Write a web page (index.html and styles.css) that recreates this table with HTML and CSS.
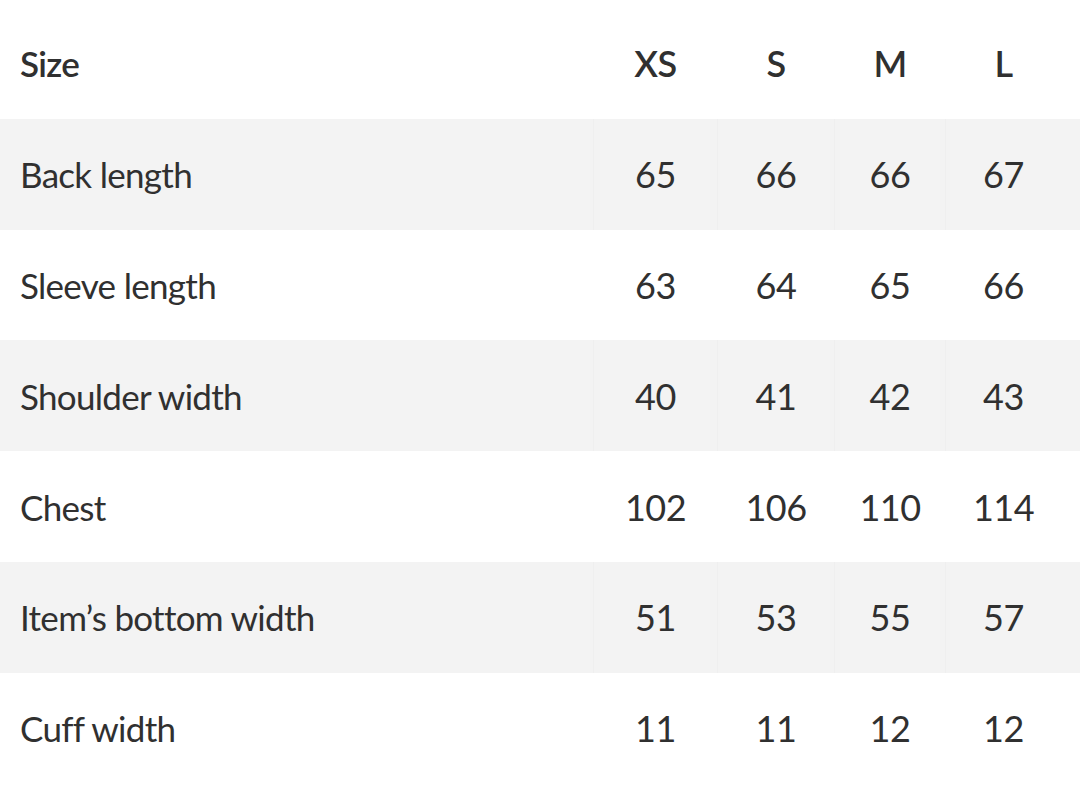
FILE: index.html
```html
<!DOCTYPE html>
<html>
<head>
<meta charset="utf-8">
<link rel="stylesheet" href="styles.css">
</head>
<body>
<div class="table">
  <div class="row head">
    <div class="label">Size</div><div class="cell">XS</div><div class="cell">S</div><div class="cell">M</div><div class="cell">L</div><div class="end"></div>
  </div>
  <div class="row alt">
    <div class="label">Back length</div><div class="cell">65</div><div class="cell">66</div><div class="cell">66</div><div class="cell">67</div><div class="end"></div>
  </div>
  <div class="row">
    <div class="label">Sleeve length</div><div class="cell">63</div><div class="cell">64</div><div class="cell">65</div><div class="cell">66</div><div class="end"></div>
  </div>
  <div class="row alt">
    <div class="label">Shoulder width</div><div class="cell">40</div><div class="cell">41</div><div class="cell">42</div><div class="cell">43</div><div class="end"></div>
  </div>
  <div class="row">
    <div class="label">Chest</div><div class="cell">102</div><div class="cell">106</div><div class="cell">110</div><div class="cell">114</div><div class="end"></div>
  </div>
  <div class="row alt">
    <div class="label">Item’s bottom width</div><div class="cell">51</div><div class="cell">53</div><div class="cell">55</div><div class="cell">57</div><div class="end"></div>
  </div>
  <div class="row">
    <div class="label">Cuff width</div><div class="cell">11</div><div class="cell">11</div><div class="cell">12</div><div class="cell">12</div><div class="end"></div>
  </div>
</div>
</body>
</html>
```
FILE: styles.css
```css
html, body {
  margin: 0;
  padding: 0;
  background: #ffffff;
}
body {
  padding-top: 8px;
  font-family: "Lato", "Noto Sans", sans-serif;
  color: #303030;
}
.table {
  display: flex;
  flex-direction: column;
  width: 1080px;
}
.row {
  display: grid;
  grid-template-columns: 593px 124px 117px 111px 116px 1fr;
  height: 110.8px;
  align-items: stretch;
  font-size: 36px;
  font-weight: 400;
}
.row.alt {
  background: #f3f3f3;
}
.row.alt .cell {
  border-left: 1px solid #efefef;
}
.row.head {
  font-weight: 600;
}
.label {
  display: flex;
  align-items: center;
  padding-left: 20px;
  font-size: 35px;
  letter-spacing: -0.7px;
}
.cell {
  display: flex;
  align-items: center;
  justify-content: center;
  box-sizing: border-box;
  border-left: 1px solid transparent;
  letter-spacing: -0.5px;
}
```
